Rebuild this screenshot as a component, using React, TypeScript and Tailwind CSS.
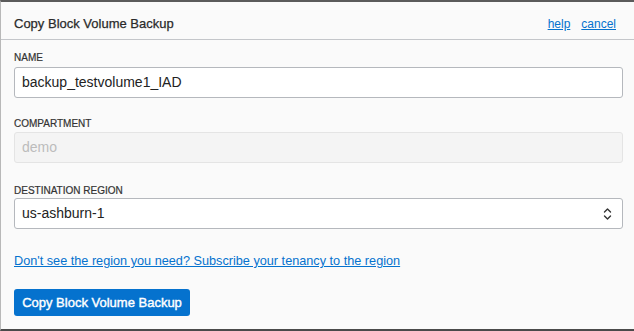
export default function App() {
  return (
    <div
      className="w-[634px] h-[331px] flex flex-col border-t-2 border-t-[#5b5b5b] border-l border-l-[#b8b8b8] border-b-2 border-b-[#4a4a4a] bg-[#fafafa] overflow-hidden"
      style={{ fontFamily: '"Liberation Sans", Arial, sans-serif' }}
    >
      <div className="h-[38px] flex items-start justify-between border-b border-[#c4c6ca] pl-[13px] pr-[18px] pt-[14px]">
        <div className="text-[13px] leading-[16px] text-[#2a2a2a] [-webkit-text-stroke:0.25px_#2a2a2a]">Copy Block Volume Backup</div>
        <div className="flex gap-[11px] text-[12px] leading-[16px] text-[#0572ce]">
          <span className="underline">help</span>
          <span className="underline">cancel</span>
        </div>
      </div>
      <div className="flex-1 flex flex-col pl-[13px] pr-[11px] bg-[#fafafa]">
        <div className="mt-[12px] text-[10px] leading-[12px] text-[#333] uppercase [-webkit-text-stroke:0.2px_#333]">Name</div>
        <div className="mt-[3px] h-[31px] rounded-[3px] border border-[#b5b8bd] bg-white flex items-center px-[7px] text-[14px] text-[#222]">
          backup_testvolume1_IAD
        </div>
        <div className="mt-[20px] text-[10px] leading-[12px] text-[#333] uppercase [-webkit-text-stroke:0.2px_#333]">Compartment</div>
        <div className="mt-[2px] h-[31px] rounded-[3px] border border-[#e4e4e4] bg-[#f4f4f4] flex items-center px-[7px] text-[14px] text-[#bcbcbc]">
          demo
        </div>
        <div className="mt-[22px] text-[10px] leading-[12px] text-[#333] uppercase [-webkit-text-stroke:0.2px_#333]">Destination Region</div>
        <div className="mt-[1px] h-[31px] rounded-[3px] border border-[#b5b8bd] bg-white flex items-center justify-between pl-[7px] pr-[10px] text-[14px] text-[#222]">
          <span>us-ashburn-1</span>
          <svg width="9" height="14" viewBox="0 0 9 14" fill="none" stroke="#333" strokeWidth="1.4" strokeLinecap="round" strokeLinejoin="round">
            <path d="M1.5 5 L4.5 2 L7.5 5" />
            <path d="M1.5 9 L4.5 12 L7.5 9" />
          </svg>
        </div>
        <div className="mt-[24px] text-[12.7px] leading-[16px] text-[#0572ce] underline">
          Don't see the region you need? Subscribe your tenancy to the region
        </div>
        <div className="mt-[20px]">
          <button className="h-[27px] w-[176px] rounded-[3px] bg-[#0572ce] text-white text-[13px] font-normal [-webkit-text-stroke:0.4px_white]">
            Copy Block Volume Backup
          </button>
        </div>
      </div>
    </div>
  );
}
